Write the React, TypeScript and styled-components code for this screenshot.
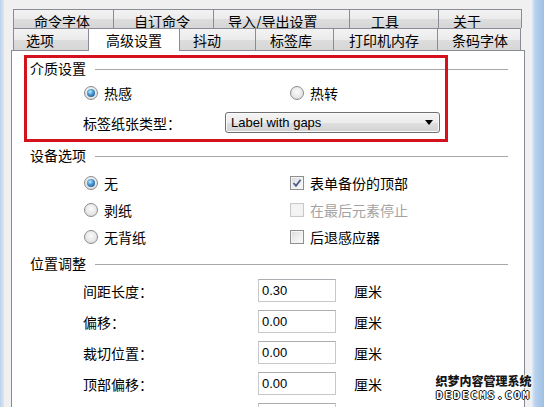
import React from "react";
import styled, { createGlobalStyle } from "styled-components";

const Global = createGlobalStyle`
  html, body { margin: 0; padding: 0; width: 544px; height: 407px; overflow: hidden; background: #f0f0f0; }
  body { font-family: "Noto Sans CJK SC", "Noto Sans", sans-serif; font-size: 14px; color: #000; }
  * { box-sizing: border-box; }
`;

const Window = styled.div`
  position: relative;
  display: flex;
  width: 544px;
  height: 407px;
  overflow: hidden;
`;

const LeftFrame = styled.div`
  flex: none;
  width: 4px;
  background: linear-gradient(to right, #bcd3ec, #dbe7f4);
`;

const RightFrame = styled.div`
  flex: none;
  width: 12px;
  background: linear-gradient(to right, #dfeaf6 0, #b9d2ed 25%, #9dbfe4 100%);
`;

const Client = styled.div`
  flex: 1;
  min-width: 0;
  display: flex;
  flex-direction: column;
  background: #f0f0f0;
  padding: 9px 7px 0 7px;
`;

const TabStrip = styled.div`
  margin: 0 3px 0 2px;
  position: relative;
  z-index: 2;
`;

const TabRow = styled.div<{ $h: number; $pt: number }>`
  display: flex;
  height: ${(p) => p.$h}px;
  & > div {
    padding-top: ${(p) => p.$pt}px;
  }
`;

const Tab = styled.div<{ $w: number; $pl: number; $active?: boolean }>`
  flex: none;
  width: ${(p) => p.$w}px;
  height: ${(p) => (p.$active ? "calc(100% + 1px)" : "100%")};
  padding-left: ${(p) => p.$pl}px;
  display: flex;
  align-items: center;
  border-top: 1px solid #898c95;
  border-left: 1px solid #898c95;
  background: ${(p) =>
    p.$active ? "#ffffff" : "linear-gradient(to bottom, #f3f3f3 0%, #ebebeb 50%, #dddddd 51%, #d6d6d6 100%)"};
  position: relative;
  z-index: ${(p) => (p.$active ? 3 : 1)};
  line-height: 18px;
  white-space: nowrap;
  &:last-child {
    border-right: 1px solid #898c95;
  }
  ${(p) => (p.$active ? "border-right: 1px solid #898c95; margin-right: -1px;" : "")}
`;

const Panel = styled.div`
  position: relative;
  flex: 1;
  background: #ffffff;
  border: 1px solid #898c95;
  border-bottom: none;
  padding: 0 16px 0 18px;
`;

const GroupHeader = styled.div<{ $mt: number }>`
  display: flex;
  align-items: center;
  height: 18px;
  margin-top: ${(p) => p.$mt}px;
  gap: 9px;
  line-height: 18px;
`;

const GroupLine = styled.div`
  flex: 1;
  height: 1px;
  background: #a7a7a7;
  margin-top: 3px;
`;

const OptionGrid = styled.div<{ $mt: number; $rowH: number; $gap: number }>`
  display: grid;
  grid-template-columns: 206px auto;
  grid-auto-rows: ${(p) => p.$rowH}px;
  row-gap: ${(p) => p.$gap}px;
  margin-top: ${(p) => p.$mt}px;
  padding-left: 54px;
`;

const Option = styled.label<{ $disabled?: boolean }>`
  display: flex;
  align-items: center;
  gap: 6px;
  line-height: 18px;
  color: ${(p) => (p.$disabled ? "#a3a3a3" : "#000")};
  white-space: nowrap;
`;

const RadioDot = styled.span<{ $checked?: boolean }>`
  flex: none;
  width: 14px;
  height: 14px;
  border-radius: 50%;
  border: 1px solid #8c8c8c;
  background: radial-gradient(circle at 50% 40%, #fbfbfb 0, #e8e8e8 55%, #cfcfcf 100%);
  display: flex;
  align-items: center;
  justify-content: center;
  &::after {
    content: "";
    display: ${(p) => (p.$checked ? "block" : "none")};
    width: 8px;
    height: 8px;
    border-radius: 50%;
    background: radial-gradient(circle at 40% 35%, #c4ecff 0, #4a9ad8 40%, #123d6c 100%);
  }
`;

const CheckBox = styled.span<{ $disabled?: boolean }>`
  flex: none;
  width: 14px;
  height: 14px;
  border: 1px solid ${(p) => (p.$disabled ? "#c9c9c9" : "#8e8f8f")};
  background: ${(p) =>
    p.$disabled ? "#f4f4f4" : "linear-gradient(135deg, #d9d9d9 0%, #eeeeee 50%, #fbfbfb 100%)"};
  box-shadow: inset 0 0 0 1px ${(p) => (p.$disabled ? "#f0f0f0" : "#f4f4f4")};
  display: flex;
  align-items: center;
  justify-content: center;
`;

const FieldRow = styled.div`
  display: flex;
  align-items: center;
  height: 21px;
  margin-top: 8px;
  padding-left: 53px;
`;

const FieldLabel = styled.span<{ $w: number }>`
  flex: none;
  width: ${(p) => p.$w}px;
  line-height: 18px;
  white-space: nowrap;
`;

const Combo = styled.div`
  width: 215px;
  height: 21px;
  border: 1px solid #707070;
  border-radius: 3px;
  background: linear-gradient(to bottom, #f4f4f4 0%, #ececec 50%, #dfdfdf 51%, #d2d2d2 100%);
  box-shadow: inset 0 0 0 1px #fafafa;
  display: flex;
  align-items: center;
  justify-content: space-between;
  padding: 0 6px 0 5px;
  font-family: "Liberation Sans", Arial, sans-serif;
  font-size: 13px;
`;

const Arrow = styled.span`
  width: 0;
  height: 0;
  border-left: 4px solid transparent;
  border-right: 4px solid transparent;
  border-top: 5px solid #000;
`;

const PosGrid = styled.div`
  display: grid;
  grid-template-columns: 175px 78px auto;
  grid-auto-rows: 23px;
  row-gap: 8px;
  margin-top: 7px;
  padding-left: 53px;
  align-items: center;
`;

const NumInput = styled.div`
  height: 23px;
  border: 1px solid #c6c8cc;
  border-top-color: #abadb3;
  background: #fff;
  display: flex;
  align-items: center;
  padding-left: 3px;
  font-family: "Liberation Sans", Arial, sans-serif;
  font-size: 13px;
`;

const Unit = styled.span`
  margin-left: 18px;
  line-height: 18px;
`;

const Highlight = styled.div`
  position: absolute;
  left: 12px;
  top: 4px;
  width: 424px;
  height: 87px;
  border: 3px solid #d3121e;
  pointer-events: none;
`;

const Watermark = styled.div`
  position: absolute;
  left: 434px;
  top: 373px;
  width: 99px;
  display: flex;
  flex-direction: column;
  align-items: center;
  pointer-events: none;
  z-index: 5;
`;

const WmCn = styled.div`
  font-family: "Noto Sans CJK SC", sans-serif;
  font-weight: 900;
  font-size: 12px;
  line-height: 16px;
  color: #151515;
  text-shadow: 1px 0 0 #fff, -1px 0 0 #fff, 0 1px 0 #fff, 0 -1px 0 #fff;
  white-space: nowrap;
`;

const WmEn = styled.div`
  font-family: "DejaVu Sans Mono", monospace;
  font-weight: bold;
  font-size: 11px;
  line-height: 13px;
  letter-spacing: 2px;
  color: #fff;
  text-shadow: 1px 0 0 #111, -1px 0 0 #111, 0 1px 0 #111, 0 -1px 0 #111;
  white-space: nowrap;
`;

const row1 = [
  { t: "命令字体", w: 100, pl: 20 },
  { t: "自订命令", w: 100, pl: 20 },
  { t: "导入/导出设置", w: 136, pl: 14 },
  { t: "工具", w: 89, pl: 21 },
  { t: "关于", w: 84, pl: 14 },
];

const row2 = [
  { t: "选项", w: 75, pl: 12 },
  { t: "高级设置", w: 92, pl: 17, active: true },
  { t: "抖动", w: 76, pl: 13 },
  { t: "标签库", w: 78, pl: 14 },
  { t: "打印机内存", w: 104, pl: 15 },
  { t: "条码字体", w: 84, pl: 14 },
];

const positions = [
  { label: "间距长度：", value: "0.30", unit: "厘米" },
  { label: "偏移：", value: "0.00", unit: "厘米" },
  { label: "裁切位置：", value: "0.00", unit: "厘米" },
  { label: "顶部偏移：", value: "0.00", unit: "厘米" },
  { label: "", value: "", unit: "" },
];

const Check = () => (
  <svg width="10" height="10" viewBox="0 0 10 10">
    <path d="M1.5 5 L4 7.8 L8.6 1.8" fill="none" stroke="#4a5d86" strokeWidth="1.8" />
  </svg>
);

export default function App() {
  return (
    <Window>
      <Global />
      <LeftFrame />
      <Client>
        <TabStrip>
          <TabRow $h={19} $pt={4}>
            {row1.map((t) => (
              <Tab key={t.t} $w={t.w} $pl={t.pl}>
                {t.t}
              </Tab>
            ))}
          </TabRow>
          <TabRow $h={22} $pt={0}>
            {row2.map((t) => (
              <Tab key={t.t} $w={t.w} $pl={t.pl} $active={t.active}>
                {t.t}
              </Tab>
            ))}
          </TabRow>
        </TabStrip>
        <Panel>
          <GroupHeader $mt={8}>
            <span>介质设置</span>
            <GroupLine />
          </GroupHeader>
          <OptionGrid $mt={5} $rowH={22} $gap={0}>
            <Option>
              <RadioDot $checked />
              热感
            </Option>
            <Option>
              <RadioDot />
              热转
            </Option>
          </OptionGrid>
          <FieldRow>
            <FieldLabel $w={142}>标签纸张类型：</FieldLabel>
            <Combo>
              <span>Label with gaps</span>
              <Arrow />
            </Combo>
          </FieldRow>

          <GroupHeader $mt={13}>
            <span>设备选项</span>
            <GroupLine />
          </GroupHeader>
          <OptionGrid $mt={8} $rowH={22} $gap={5}>
            <Option>
              <RadioDot $checked />
              无
            </Option>
            <Option>
              <CheckBox>
                <Check />
              </CheckBox>
              表单备份的顶部
            </Option>
            <Option>
              <RadioDot />
              剥纸
            </Option>
            <Option $disabled>
              <CheckBox $disabled />
              在最后元素停止
            </Option>
            <Option>
              <RadioDot />
              无背纸
            </Option>
            <Option>
              <CheckBox />
              后退感应器
            </Option>
          </OptionGrid>

          <GroupHeader $mt={6}>
            <span>位置调整</span>
            <GroupLine />
          </GroupHeader>
          <PosGrid>
            {positions.map((p, i) => (
              <React.Fragment key={i}>
                <FieldLabel $w={175}>{p.label}</FieldLabel>
                <NumInput>{p.value}</NumInput>
                <Unit>{p.unit}</Unit>
              </React.Fragment>
            ))}
          </PosGrid>
          <Highlight />
        </Panel>
      </Client>
      <RightFrame />
      <Watermark>
        <WmCn>织梦内容管理系统</WmCn>
        <WmEn>DEDECMS.COM</WmEn>
      </Watermark>
    </Window>
  );
}
